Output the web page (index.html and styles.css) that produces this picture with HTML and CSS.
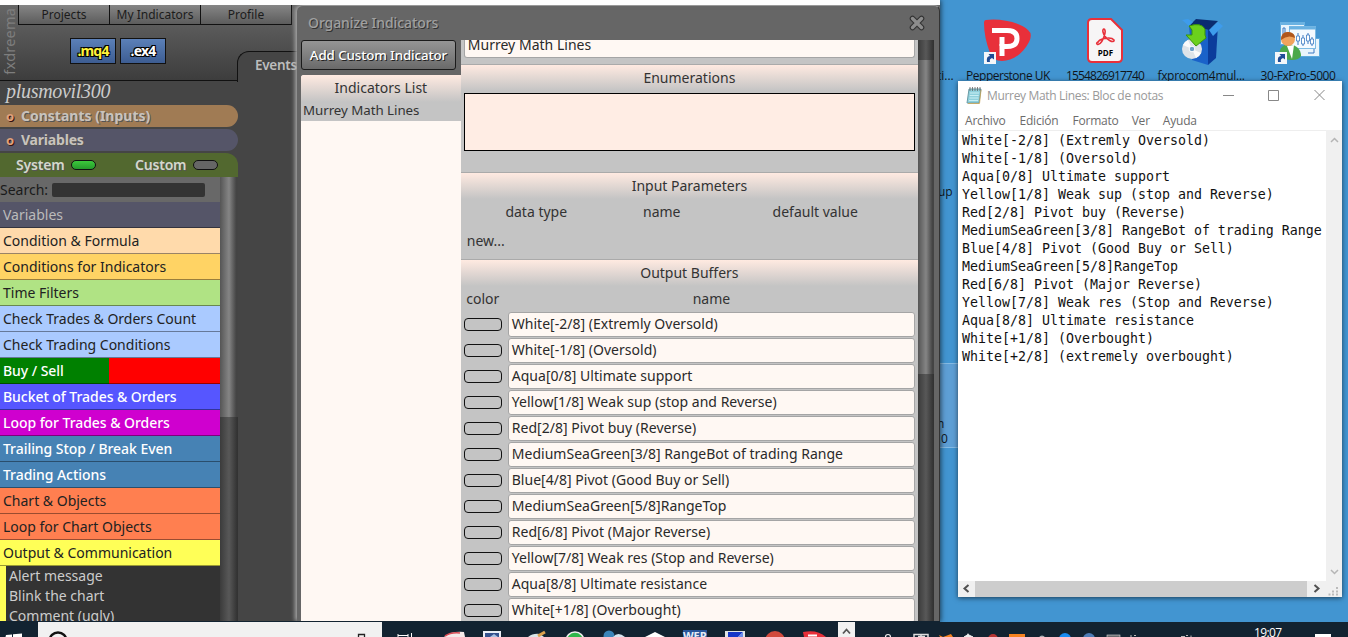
FILE: index.html
```html
<!DOCTYPE html>
<html lang="es">
<head>
  <meta charset="UTF-8">
  <title>Organize Indicators</title>
  <link rel="stylesheet" href="styles.css">
</head>
<body>

  <div class="desktop">

    <!-- desktop shortcuts -->
    <div class="selection"></div>
    <div class="stray s1">ti...</div>
    <div class="stray s2">up</div>
    <div class="stray s3">n</div>
    <div class="stray s4">0</div>

    <div class="shortcut pepper">
      <svg width="50" height="50" viewBox="4 0 50 50">
        <path d="M7 2 C20 0 41 4 49 12 Q54 16 50 24 C44 36 33 43 23 43 Q14 43 11 35 Q5 19 5 5 Q5 2 7 2z" fill="#e8303a"/>
        <path d="M13 12.500 H28 Q38 12.500 38 20.500 Q38 28.500 28 28.500 H23 V38" fill="none" stroke="#fff" stroke-width="5"/>
        <path d="M23 19 V28" stroke="#fff" stroke-width="5"/>
        <rect x="5" y="34" width="12" height="12" fill="#f4f6f9"/>
        <path d="M8 44 Q7 38 11 38 L9.500 36 H15 V41.500 L13 40 Q10 41 11 44z" fill="#1f4c96"/>
      </svg>
      <span>Pepperstone UK</span>
    </div>
    <div class="shortcut pdf">
      <svg width="50" height="50" viewBox="0 0 50 50">
        <path d="M12 1 H31 L42 12 V40 Q42 44 38 44 H12 Q8 44 8 40 V5 Q8 1 12 1z" fill="#f7f5f6" stroke="#e8303a" stroke-width="2"/>
        <path d="M18 25 C17 21 31 18 34 22 C35 26 25 22 23 14 C22 10 26 10 25 15 C24 21 20 28 17 26 Q16 25 18 24" fill="none" stroke="#e8303a" stroke-width="1.600"/>
        <text x="25.500" y="38" text-anchor="middle" class="pdf-tag">PDF</text>
      </svg>
      <span>1554826917740</span>
    </div>
    <div class="shortcut fxpro">
      <svg width="50" height="50" viewBox="-3 0 50 50">
        <path d="M10 8 L29 12 V47 L13 42z" fill="#1a62c9"/>
        <path d="M29 12 L39 6 L37 40 L29 47z" fill="#0b3c9b"/>
        <path d="M10 8 L17 1 L39 3 L30 12z" fill="#0a2c70"/>
        <path d="M10 8 L3 2 L9 1 L14 4z M30 12 L39 4 L44 8 L34 18z" fill="#3e9cec"/>
        <circle cx="13" cy="31" r="10" fill="#dde3e8"/>
        <path d="M13 31 L4 27 A10 10 0 0 1 9 22z M13 31 L22 35 A10 10 0 0 1 17 40z" fill="#fafafa"/>
        <circle cx="13" cy="31" r="2.800" fill="#6f9fc8" stroke="#fff"/>
        <path d="M10 8 Q22 4 26 11 V17 L27 20 L17 28 L7 17 L13 17 V12z" fill="#6bd01c" stroke="#399409"/>
      </svg>
      <span>fxprocom4mul...</span>
    </div>
    <div class="shortcut fx30">
      <svg width="50" height="50" viewBox="3 0 50 50">
        <rect x="10.500" y="4.500" width="24" height="22" fill="#e8f4fc" stroke="#5aa9dd"/>
        <rect x="24.500" y="20.500" width="25" height="18" fill="#e8f4fc" stroke="#5aa9dd"/>
        <rect x="19.500" y="8.500" width="26" height="22" fill="#f4faff" stroke="#7dbbe4"/>
        <path d="M10 5.500 H35 M19 10 H46" stroke="#6ab2e2" stroke-width="3"/>
        <path d="M13 17 V10 H15 V16 M28 15 V27 M33 17 V28 M38 15 V26 M42 19 V28 M38 35 H44 V31" stroke="#3a78c2" fill="none"/>
        <path d="M26.500 18 h3 v5 h-3z M31.500 20 h3 v6 h-3z M36.500 17 h3 v6 h-3z M40.500 21 h3 v5 h-3z" fill="#fff" stroke="#3a78c2" stroke-width=".8"/>
        <path d="M9 41 Q8 27 19 26 Q31 28 31 38 Q29 42 22 42z" fill="#4ba84a"/>
        <path d="M17 28 L24 27 L22 41z" fill="#fff"/>
        <circle cx="18" cy="21" r="7" fill="#f0a35d"/>
        <path d="M11 22 Q11 13 19 14 Q25 15 25 20 Q18 16 11 22z" fill="#b0571c"/>
        <rect x="5" y="34" width="12" height="12" fill="#f4f6f9"/>
        <path d="M8 44 Q7 38 11 38 L9.500 36 H15 V41.500 L13 40 Q10 41 11 44z" fill="#1f4c96"/>
      </svg>
      <span>30-FxPro-5000</span>
    </div>

    <!-- fxdreema in the browser -->
    <div class="app">
      <div class="app-head">
        <div class="brand"><span>fxdreema</span></div>
        <div class="head-left">
          <div class="menu">
            <span>Projects</span>
            <span>My Indicators</span>
            <span>Profile</span>
          </div>
          <div class="builds">
            <button class="build mq4">.mq4</button>
            <button class="build">.ex4</button>
          </div>
        </div>
      </div>
      <div class="tab-events">Events</div>

      <div class="sidebar">
        <div class="user">plusmovil300</div>
        <div class="bar constants"><i>o</i>Constants (Inputs)</div>
        <div class="bar variables"><i>o</i>Variables</div>
        <div class="bar types">
          <span class="system">System</span><em class="led on"></em>
          <span class="custom">Custom</span><em class="led"></em>
        </div>
        <div class="blocks">
          <div class="list">
            <div class="search">Search:<input type="text"></div>
            <div class="cat c-var">Variables</div>
            <div class="cat c-formula">Condition &amp; Formula</div>
            <div class="cat c-ind">Conditions for Indicators</div>
            <div class="cat c-time">Time Filters</div>
            <div class="cat c-check">Check Trades &amp; Orders Count</div>
            <div class="cat c-check">Check Trading Conditions</div>
            <div class="cat c-buysell">Buy / Sell</div>
            <div class="cat c-bucket">Bucket of Trades &amp; Orders</div>
            <div class="cat c-loop">Loop for Trades &amp; Orders</div>
            <div class="cat c-trade">Trailing Stop / Break Even</div>
            <div class="cat c-trade">Trading Actions</div>
            <div class="cat c-chart">Chart &amp; Objects</div>
            <div class="cat c-chart">Loop for Chart Objects</div>
            <div class="cat c-out">Output &amp; Communication</div>
            <div class="sub">
              <div>Alert message</div>
              <div>Blink the chart</div>
              <div>Comment (ugly)</div>
            </div>
          </div>
          <div class="scroll"><div class="thumb"></div></div>
        </div>
      </div>

      <div class="modal">
        <div class="modal-head">
          <span>Organize Indicators</span>
          <svg width="18" height="18" viewBox="0 0 18 18">
            <path d="M4.500 4.500 L13.500 13.500 M13.500 4.500 L4.500 13.500" stroke="#333" stroke-width="5.600" stroke-linecap="round"/>
            <path d="M4.500 4.500 L13.500 13.500 M13.500 4.500 L4.500 13.500" stroke="#8d8d8d" stroke-width="3.400" stroke-linecap="round"/>
          </svg>
        </div>
        <div class="modal-body">
          <div class="indicators">
            <button class="add">Add Custom Indicator</button>
            <div class="ind-list">
              <div class="ind-title">Indicators List</div>
              <div class="ind-item">Murrey Math Lines</div>
            </div>
          </div>
          <div class="form">
            <div class="field name-field">Murrey Math Lines</div>
            <div class="section">Enumerations</div>
            <div class="enum"></div>
            <div class="section">Input Parameters</div>
            <div class="cols params"><span>data type</span><span>name</span><span>default value</span></div>
            <div class="new">new...</div>
            <div class="section">Output Buffers</div>
            <div class="cols buffers"><span>color</span><span>name</span></div>
            <div class="row"><i class="swatch"></i><div class="field">White[-2/8] (Extremly Oversold)</div></div>
            <div class="row"><i class="swatch"></i><div class="field">White[-1/8] (Oversold)</div></div>
            <div class="row"><i class="swatch"></i><div class="field">Aqua[0/8] Ultimate support</div></div>
            <div class="row"><i class="swatch"></i><div class="field">Yellow[1/8] Weak sup (stop and Reverse)</div></div>
            <div class="row"><i class="swatch"></i><div class="field">Red[2/8] Pivot buy (Reverse)</div></div>
            <div class="row"><i class="swatch"></i><div class="field">MediumSeaGreen[3/8] RangeBot of trading Range</div></div>
            <div class="row"><i class="swatch"></i><div class="field">Blue[4/8] Pivot (Good Buy or Sell)</div></div>
            <div class="row"><i class="swatch"></i><div class="field">MediumSeaGreen[5/8]RangeTop</div></div>
            <div class="row"><i class="swatch"></i><div class="field">Red[6/8] Pivot (Major Reverse)</div></div>
            <div class="row"><i class="swatch"></i><div class="field">Yellow[7/8] Weak res (Stop and Reverse)</div></div>
            <div class="row"><i class="swatch"></i><div class="field">Aqua[8/8] Ultimate resistance</div></div>
            <div class="row"><i class="swatch"></i><div class="field">White[+1/8] (Overbought)</div></div>
          </div>
          <div class="scroll modal-scroll"><div class="thumb"></div></div>
        </div>
      </div>
    </div>

    <!-- notepad window -->
    <div class="notepad">
      <div class="np-title">
        <svg width="16" height="18" viewBox="0 0 16 18">
          <path d="M3 2 H15 L13 16 H1z" fill="#8fd0dc" stroke="#6a9ca6"/>
          <path d="M4 6 H13 M3.700 8.500 H12.700 M3.400 11 H12.400 M3 13.500 H12" stroke="#c9eef3"/>
          <path d="M4 0 V4 M6.500 0 V4 M9 0 V4 M11.500 0 V4 M14 0 V4" stroke="#666" stroke-width=".8"/>
          <path d="M15 3 L13.500 16.500 H2" fill="none" stroke="#c9a24f" stroke-width=".8"/>
        </svg>
        <span>Murrey Math Lines: Bloc de notas</span>
        <svg class="np-controls" width="103" height="14" viewBox="0 0 103 14">
          <path d="M0 6.500 H11 M45.500 1.500 h10 v10 h-10z M91.500 1 l10 10 M101.500 1 l-10 10" fill="none" stroke="#888"/>
        </svg>
      </div>
      <div class="np-menu"><span>Archivo</span><span>Edición</span><span>Formato</span><span>Ver</span><span>Ayuda</span></div>
      <div class="np-main">
<pre>White[-2/8] (Extremly Oversold)
White[-1/8] (Oversold)
Aqua[0/8] Ultimate support
Yellow[1/8] Weak sup (stop and Reverse)
Red[2/8] Pivot buy (Reverse)
MediumSeaGreen[3/8] RangeBot of trading Range
Blue[4/8] Pivot (Good Buy or Sell)
MediumSeaGreen[5/8]RangeTop
Red[6/8] Pivot (Major Reverse)
Yellow[7/8] Weak res (Stop and Reverse)
Aqua[8/8] Ultimate resistance
White[+1/8] (Overbought)
White[+2/8] (extremely overbought)</pre>
        <div class="np-vscroll">
          <svg width="9" height="6" viewBox="0 0 9 6"><path d="M1 5 L4.500 1.500 L8 5" fill="none" stroke="#b5b5b5" stroke-width="1.500"/></svg>
          <svg width="9" height="6" viewBox="0 0 9 6"><path d="M1 1 L4.500 4.500 L8 1" fill="none" stroke="#b5b5b5" stroke-width="1.500"/></svg>
        </div>
      </div>
      <div class="np-hscroll">
        <svg width="17" height="15" viewBox="0 0 17 15"><path d="M10.500 4 L6.500 7.500 L10.500 11" fill="none" stroke="#505050" stroke-width="2"/></svg>
        <div class="np-thumb"></div>
        <svg width="17" height="15" viewBox="0 0 17 15"><path d="M7.500 4 L11.500 7.500 L7.500 11" fill="none" stroke="#505050" stroke-width="2"/></svg>
        <svg width="18" height="15" viewBox="0 0 18 15"><path d="M12 6h2v2h-2z M8 9.500h2v2H8z M12 9.500h2v2h-2z M4.500 12.500h2v2h-2z M8 12.500h2v2H8z M12 12.500h2v2h-2z" fill="#bbb"/></svg>
      </div>
    </div>

    <div class="taskbar">
      <svg width="1348" height="15" viewBox="0 0 1348 15">
        <path d="M6 13 L12 12.500 V15 H5.500z M13 12.200 L22 11.500 V15 H13z" fill="#fff"/>
        <rect x="38" y="0" width="344" height="15" fill="#f1f1f1"/>
        <circle cx="58" cy="19" r="8.500" fill="none" stroke="#111" stroke-width="2.500"/>
        <path d="M358.500 15 V12.500 H364.500 V15" fill="none" stroke="#222" stroke-width="1.300"/>
        <path d="M398 12 V15 M398 13.500 H408 M408 12 V15 M411.500 11 V15" stroke="#fff" fill="none"/>
        <path d="M444 15 Q450 9 464 10 L465 15z" fill="#f4e9e9"/>
        <path d="M445 14 Q451 10 460 11" stroke="#d84a54" stroke-width="1.600" fill="none"/>
        <rect x="483" y="9" width="18" height="6" fill="#e9eef6"/>
        <rect x="485" y="11" width="14" height="4" fill="#34518e"/>
        <path d="M490 15 L494 12 L498 15z" fill="#a9c2e4"/>
        <path d="M528 15 Q533 11 540 12 L544 15z" fill="#d9e5e8"/>
        <path d="M538 14 L545 10" stroke="#dba04d" stroke-width="3"/>
        <circle cx="575" cy="19" r="9" fill="#2fb64b" stroke="#eee" stroke-width="1.500"/>
        <circle cx="609" cy="14" r="5.500" fill="#3b85b9"/>
        <path d="M613 15 Q618 9 625 15z" fill="#d6e4ee"/>
        <path d="M645 15 L655 10 L665 15z" fill="#fff"/>
        <rect x="683" y="8" width="24" height="7" fill="#28569b"/>
        <text x="695" y="17.500" text-anchor="middle" class="task-word">WER</text>
        <rect x="725" y="9" width="20" height="6" fill="#dfe4e4"/>
        <path d="M728 10 H743 L738 15 H728z" fill="#1636c8"/>
        <path d="M743 10 L738 15 H743z" fill="#6a8bea"/>
        <circle cx="775" cy="19" r="10" fill="#d14a3d"/>
        <path d="M803 10 Q817 7 826 15 H804z" fill="#e8303a"/>
        <path d="M808 13.500 H817" stroke="#fff" stroke-width="2"/>
        <rect x="838" y="0" width="17" height="15" fill="#f1f1f1"/>
        <path d="M843 11.500 L846.500 7.500 L850 11.500" fill="none" stroke="#555" stroke-width="1.800"/>
        <circle cx="888" cy="15" r="2.500" fill="none" stroke="#eee" stroke-width="1.200"/>
        <path d="M914 15 V12.500 H928 V15 M918 14.500 H925 M921 12 V15" stroke="#ddd" stroke-width="1.500" fill="none"/>
        <path d="M939 13 L943 15 L951 12 L953 15 H940z" fill="#f58220"/>
        <path d="M964 15 L968 12.500 L973 15z M968 11.500 V15" fill="#eee" stroke="#eee"/>
        <circle cx="993" cy="17" r="5" fill="#b73432"/>
        <rect x="1009" y="12" width="16" height="3" fill="#f58220"/>
        <circle cx="1042" cy="16.500" r="3" fill="#a9b0b5"/>
        <circle cx="1065" cy="17" r="6" fill="#168bf2"/>
        <circle cx="1089" cy="17" r="6" fill="#4e7db7"/>
        <rect x="1107" y="13" width="13" height="3" fill="#65696c" stroke="#ddd" stroke-width=".6"/>
        <path d="M1130 14 H1132 M1134 13.500 H1136 M1181 14.500 H1185 M1186 13.500 H1188 M1191 13.500 V15" stroke="#bbb"/>
        <rect x="1315" y="12" width="16" height="3" fill="#fff"/>
      </svg>
      <span class="clock">19:07</span>
    </div>
  </div>

</body>
</html>
```
FILE: styles.css
```css
* {
  box-sizing: border-box;
}
body {
  margin: 0;
  overflow: hidden;
  font-family: "Noto Sans", sans-serif;
  font-size: 14px;
}
.desktop {
  position: relative;
  width: 1348px;
  height: 637px;
  overflow: hidden;
  background: #4295d1;
}

/* desktop icons */
.shortcut {
  position: absolute;
  top: 18px;
  width: 100px;
  display: flex;
  flex-direction: column;
  align-items: center;
  font-family: "Open Sans", sans-serif;
  font-size: 12px;
  line-height: 16px;
  color: #10161c;
  white-space: nowrap;
}
.pepper { left: 958px; letter-spacing: -0.5px; }
.pdf { left: 1055px; letter-spacing: -0.85px; }
.fxpro { left: 1151px; letter-spacing: -0.3px; }
.fx30 { left: 1248px; letter-spacing: -0.45px; }
.pdf-tag {
  font: bold 8px "Open Sans", sans-serif;
  letter-spacing: 0;
}
.stray {
  position: absolute;
  font: 12px/16px "Open Sans", sans-serif;
  color: #10161c;
}
.s1 { left: 937px; top: 68px; }
.s2 { left: 938px; top: 184px; }
.s3 { left: 937px; top: 416px; }
.s4 { left: 941px; top: 431px; }
.selection {
  position: absolute;
  left: 930px;
  top: 363px;
  width: 50px;
  height: 85px;
  background: #5e9fd5;
  border: 1px solid #85bae3;
}

/* browser page */
.app {
  position: absolute;
  left: 0;
  top: 0;
  width: 940px;
  height: 622px;
  overflow: hidden;
  background: #454545;
  border-top: 5px solid #fff;
  border-bottom: 1px solid #122331;
  box-shadow: 1px 0 5px rgba(0,0,0,0.6);
}
.app-head {
  display: flex;
  height: 76px;
  background: linear-gradient(#666, #3d3d3d);
  border-bottom: 1px solid #111;
}
.brand {
  width: 18px;
  display: flex;
  justify-content: center;
  align-items: flex-end;
  overflow: hidden;
}
.brand span {
  writing-mode: vertical-rl;
  transform: rotate(180deg);
  color: #7e7e7e;
  font-size: 14.5px;
  line-height: 16px;
  letter-spacing: 0.2px;
  margin-bottom: 5px;
}
.menu {
  display: flex;
  height: 20px;
  border-left: 1px solid #111;
}
.menu span {
  width: 91px;
  border-right: 1px solid #111;
  border-bottom: 1px solid #111;
  background: linear-gradient(#868686, #5c5c5c);
  color: #1c1c1c;
  font-size: 12px;
  line-height: 20px;
  text-align: center;
}
.builds {
  display: flex;
  gap: 4px;
  padding: 13px 0 0 52px;
}
.build {
  width: 46px;
  height: 26px;
  padding: 0;
  border: 1px solid #111;
  background: linear-gradient(#5b80b8, #3d5d92);
  color: #fff;
  font: bold 14px "Noto Sans", sans-serif;
  line-height: 22px;
  letter-spacing: -0.8px;
  text-shadow: 1px 1px #000, -1px -1px #000, 1px -1px #000, -1px 1px #000;
}
.mq4 {
  color: #fff23c;
}
.tab-events {
  position: absolute;
  left: 237px;
  top: 46px;
  width: 80px;
  height: 31px;
  padding-left: 17px;
  border-left: 1px solid #111;
  border-top: 1px solid #111;
  border-top-left-radius: 12px;
  background: #454545;
  color: #bdbdbd;
  font-weight: 600;
  font-size: 13.5px;
  line-height: 26px;
  letter-spacing: -0.3px;
}
.sidebar {
  width: 238px;
  height: 540px;
  display: flex;
  flex-direction: column;
}
.user {
  height: 24px;
  padding-left: 6px;
  color: #ccc;
  font: italic 20px/20px "Liberation Serif", serif;
  letter-spacing: -0.3px;
}
.bar {
  height: 22px;
  margin-bottom: 2px;
  border-radius: 0 12px 12px 0;
  color: #c8c3bd;
  font-weight: 700;
  line-height: 21px;
  padding-left: 6px;
  white-space: nowrap;
  text-shadow: 1px 1px #555;
}
.bar i {
  display: inline-block;
  width: 15px;
  color: #e0a27c;
  font-style: normal;
  font-size: 13px;
  text-shadow: 1px 1px #311;
}
.constants { background: #a07b54; }
.variables { background: #555568; letter-spacing: -0.2px; }
.types {
  display: flex;
  align-items: center;
  height: 24px;
  margin-bottom: 0;
  padding: 0 0 2px 16px;
  border-radius: 0 12px 0 0;
  background: #52682f;
  color: #d4d8cc;
  font-weight: 600;
  letter-spacing: -0.2px;
}
.system { width: 55px; }
.custom { width: 58px; margin-left: 39px; }
.led {
  width: 25px;
  height: 10px;
  margin-top: 2px;
  border: 1px solid #111;
  border-radius: 5px;
  background: #666;
}
.led.on {
  background: linear-gradient(#3cc93c, #259a2b);
}
.blocks {
  display: flex;
  flex: 1;
  min-height: 0;
}
.list {
  width: 220px;
  overflow: hidden;
  background: #333;
}
.search {
  display: flex;
  align-items: center;
  height: 25px;
  padding-bottom: 1px;
  background: #686868;
  color: #1a1a1a;
}
.search input {
  width: 153px;
  height: 14px;
  margin: 2px 0 0 4px;
  padding: 0;
  border: 0;
  border-radius: 2px;
  background: #333;
}
.cat {
  height: 26px;
  padding-left: 3px;
  border-bottom: 1px solid rgba(0,0,0,0.4);
  line-height: 25px;
  color: #222;
  white-space: nowrap;
}
.c-var { background: #555568; color: #bbb; }
.c-formula { background: #ffdaab; }
.c-ind { background: #ffd364; }
.c-time { background: #b0e384; }
.c-check { background: #aacaff; }
.c-buysell { background: linear-gradient(90deg, green 109px, red 109px); }
.c-bucket { background: #5656ff; }
.c-loop { background: #cf00cf; }
.c-trade { background: #4682b4; }
.c-chart { background: #ff7f50; }
.c-out { background: #ffff57; }
.c-buysell, .c-bucket, .c-loop, .c-trade {
  color: #fff;
  font-weight: 500;
  letter-spacing: -0.05px;
}
.sub {
  padding-left: 3px;
  border-left: 6px solid #ffff57;
  color: #ccc;
  line-height: 20px;
}
.scroll {
  width: 18px;
  background: linear-gradient(90deg, #3b3b3b, #585858 50%, #333 95%);
}
.thumb {
  height: 240px;
  background: linear-gradient(90deg, #555, #858585 50%, #444 90%);
}

/* organize indicators dialog */
.modal {
  position: absolute;
  left: 297px;
  top: 0;
  width: 643px;
  height: 616px;
  display: flex;
  flex-direction: column;
  padding: 0 5px 0 4px;
  background: #666;
  border-top: 1px solid #999;
  border-right: 1px solid #333;
  border-radius: 6px 6px 0 0;
  box-shadow: -2px 0 4px #aaa;
}
.modal-head {
  display: flex;
  justify-content: space-between;
  align-items: center;
  height: 34px;
  padding: 0 8px 2px 7px;
  color: #a0a0a0;
  font-weight: 500;
  letter-spacing: -0.1px;
  text-shadow: 1px 1px #333;
}
.modal-head svg {
  margin-top: 2px;
}
.modal-body {
  display: flex;
  flex: 1;
  min-height: 0;
}
.indicators {
  width: 160px;
  display: flex;
  flex-direction: column;
}
.add {
  width: 155px;
  height: 30px;
  margin-bottom: 5px;
  padding: 0;
  border: 1px solid #1b1b1b;
  border-radius: 3px;
  background: linear-gradient(#959595, #6a6a6a);
  color: #fff;
  font: 500 13.33px "Noto Sans", sans-serif;
  letter-spacing: -0.1px;
  text-shadow: 1px 1px #222;
}
.ind-list {
  flex: 1;
  background: #fff8f3;
  border-radius: 3px 0 0 0;
  overflow: hidden;
}
.ind-title {
  height: 27px;
  background: linear-gradient(#ffeae1, #c4c4c4);
  color: #333;
  line-height: 25px;
  text-align: center;
}
.ind-item {
  height: 19px;
  padding-left: 2px;
  background: #c4c4c4;
  color: #333;
  font-size: 13.33px;
  line-height: 16px;
  letter-spacing: -0.05px;
}
.form {
  width: 458px;
  overflow: hidden;
  background: #c4c4c4;
  color: #333;
}
.field {
  height: 25px;
  padding-left: 3px;
  border: 1px solid #a5a5a5;
  border-radius: 3px;
  background: #fff8f3;
  color: #2a2a2a;
  line-height: 22px;
  letter-spacing: 0.02px;
  white-space: nowrap;
}
.name-field {
  height: 18px;
  margin: 0 3px 6px;
  border-top: 0;
  border-radius: 0 0 3px 3px;
  line-height: 10px;
}
.section {
  height: 27px;
  border-top: 1px solid #aaa;
  background: linear-gradient(#ffeae1, #c4c4c4);
  line-height: 26px;
  text-align: center;
}
.enum {
  height: 58px;
  margin: 2px 3px 21px;
  border: 1px solid #000;
  background: #ffede4;
}
.cols {
  display: grid;
  height: 26px;
  line-height: 25px;
  text-align: center;
}
.params {
  grid-template-columns: 151px 100px 207px;
}
.buffers {
  grid-template-columns: 44px 1fr;
  height: 25px;
}
.new {
  height: 34px;
  padding-left: 6px;
  line-height: 32px;
}
.row {
  display: flex;
  align-items: center;
  gap: 6px;
  height: 26px;
  padding: 0 3px;
}
.row .field {
  flex: 1;
}
.swatch {
  width: 38px;
  height: 13px;
  border: 1px solid #111;
  border-radius: 4px;
}
.modal-scroll {
  width: 16px;
  padding-top: 20px;
}
.modal-scroll .thumb {
  height: 314px;
}

/* notepad */
.notepad {
  position: absolute;
  left: 958px;
  top: 81px;
  width: 384px;
  height: 516px;
  display: flex;
  flex-direction: column;
  background: #fff;
  box-shadow: 0 1px 5px rgba(0,0,0,0.6);
  font-family: "Open Sans", sans-serif;
}
.np-title {
  display: flex;
  align-items: center;
  height: 29px;
  padding: 0 16px 0 8px;
  color: #999;
  font-size: 12px;
  letter-spacing: -0.33px;
}
.np-title span {
  margin-left: 5px;
}
.np-controls {
  margin-left: auto;
}
.np-menu {
  display: flex;
  gap: 14px;
  height: 20px;
  padding-left: 7px;
  color: #6b6b6b;
  font-size: 12px;
  line-height: 22px;
  letter-spacing: -0.2px;
}
.np-menu span:nth-child(n+4) {
  margin-left: -1px;
}
.np-main {
  display: flex;
  flex: 1;
  min-height: 0;
}
.np-main pre {
  flex: 1;
  margin: 0;
  padding: 1px 0 0 4px;
  border-top: 1px solid #eee;
  color: #111;
  font: 13.29px/18px "DejaVu Sans Mono", monospace;
}
.np-vscroll {
  display: flex;
  flex-direction: column;
  align-items: center;
  justify-content: space-between;
  width: 16px;
  padding: 7px 0 6px;
  background: #f0f0f0;
}
.np-hscroll {
  display: flex;
  height: 16px;
  background: #f0f0f0;
}
.np-thumb {
  flex: 1;
  background: #cdcdcd;
}

/* taskbar */
.taskbar {
  position: absolute;
  left: 0;
  top: 622px;
  width: 1348px;
  height: 15px;
  overflow: hidden;
  background: #122331;
}
.taskbar svg {
  display: block;
}
.task-word {
  font: bold 11px "Open Sans", sans-serif;
  fill: #e6ecf5;
}
.clock {
  position: absolute;
  left: 1254px;
  top: 3px;
  color: #fff;
  font: 12px/16px "Open Sans", sans-serif;
  letter-spacing: -0.6px;
}
```
